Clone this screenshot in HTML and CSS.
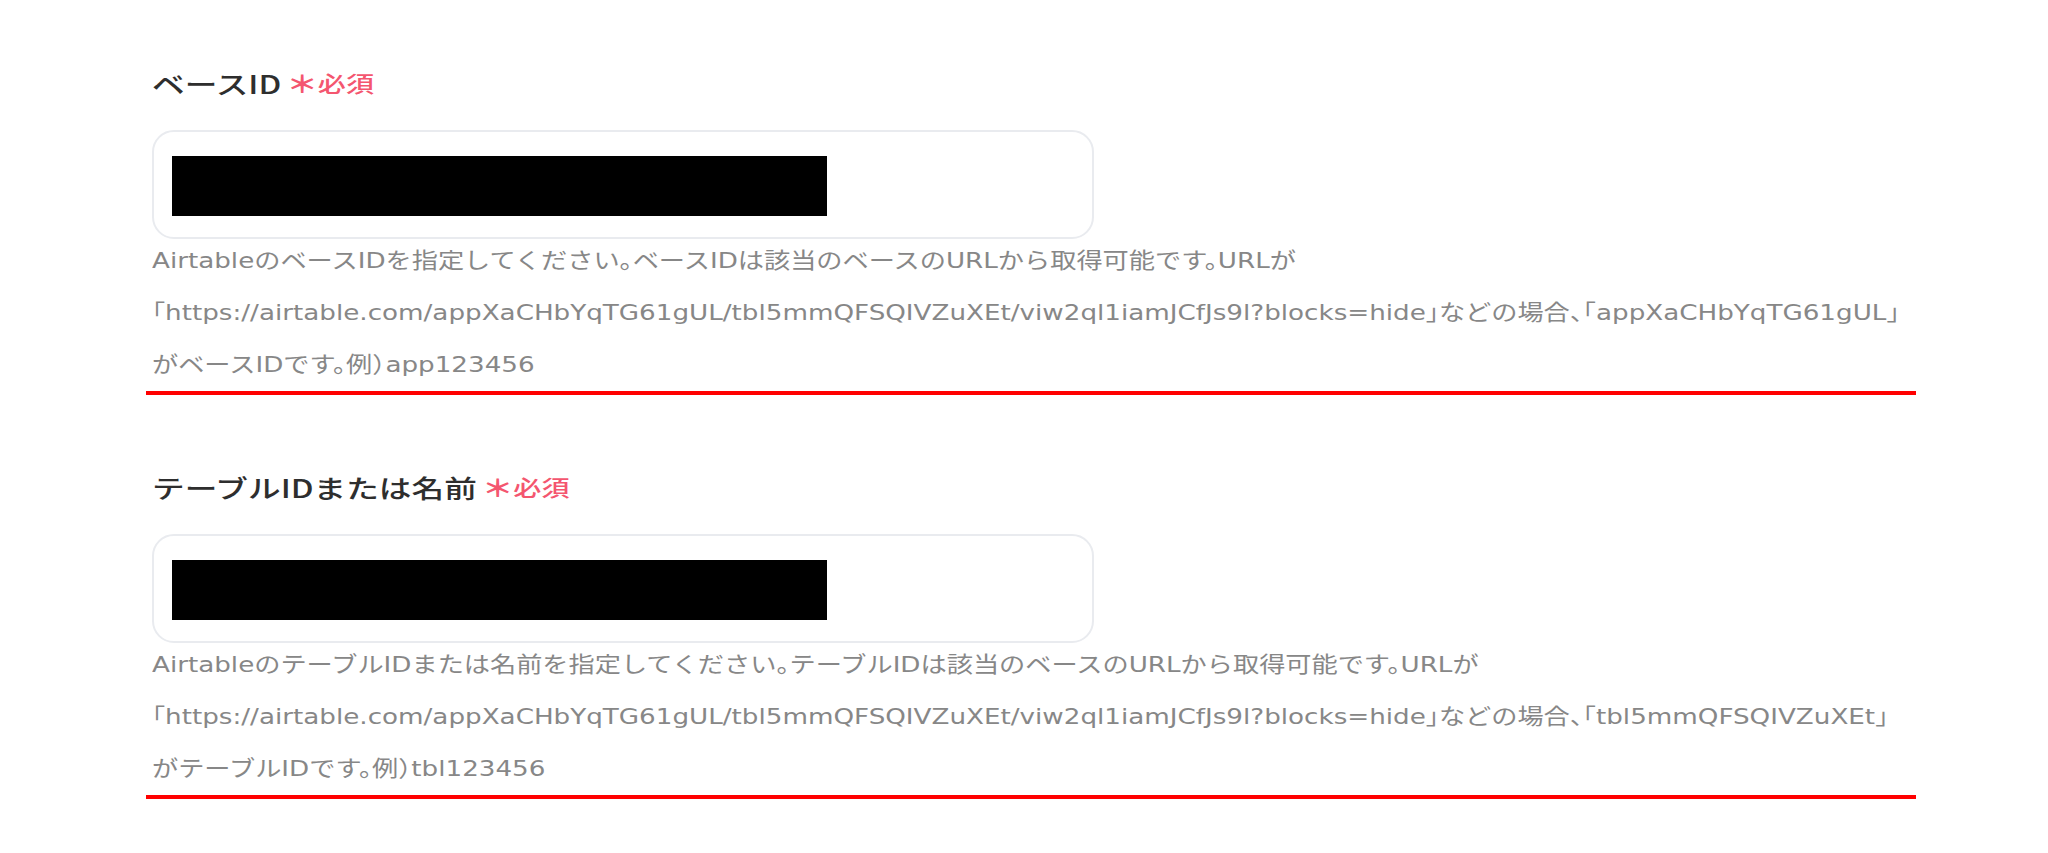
FILE: index.html
```html
<!DOCTYPE html>
<html lang="ja">
<head>
<meta charset="utf-8">
<title>Airtable 設定</title>
<link rel="stylesheet" href="styles.css">
</head>
<body>
<main class="form">
  <section class="field">
    <div class="label">ベースID<span class="req"><span class="ast">＊</span>必須</span></div>
    <div class="input"><div class="redact"></div></div>
    <p class="help">AirtableのベースIDを指定してください。ベースIDは該当のベースのURLから取得可能です。URLが<br>「https://airtable.com/appXaCHbYqTG61gUL/tbl5mmQFSQIVZuXEt/viw2ql1iamJCfJs9l?blocks=hide」などの場合、「appXaCHbYqTG61gUL」<br>がベースIDです。例）app123456</p>
  </section>
  <section class="field">
    <div class="label">テーブルIDまたは名前<span class="req"><span class="ast">＊</span>必須</span></div>
    <div class="input"><div class="redact"></div></div>
    <p class="help">AirtableのテーブルIDまたは名前を指定してください。テーブルIDは該当のベースのURLから取得可能です。URLが<br>「https://airtable.com/appXaCHbYqTG61gUL/tbl5mmQFSQIVZuXEt/viw2ql1iamJCfJs9l?blocks=hide」などの場合、「tbl5mmQFSQIVZuXEt」<br>がテーブルIDです。例）tbl123456</p>
  </section>
</main>
</body>
</html>
```
FILE: styles.css
```css
html, body {
  margin: 0;
  padding: 0;
  background: #ffffff;
}
body {
  font-family: "Noto Sans CJK JP", "Noto Sans", sans-serif;
  color: #333333;
}
.form {
  padding-top: 63px;
}
.field {
  margin-left: 146px;
  width: 1770px;
  box-sizing: border-box;
  padding-left: 6px;
  padding-bottom: 0;
  border-bottom: 4px solid #ff0000;
  margin-bottom: 72px;
}
.label {
  width: max-content;
  font-size: 25px;
  line-height: 40px;
  font-weight: 500;
  color: #2e2e2e;
  display: flex;
  align-items: center;
  transform: scaleX(1.306);
  transform-origin: 0 50%;
}
.req {
  color: #f4566f;
  font-size: 21.5px;
  font-weight: 500;
  margin-left: 4px;
  display: flex;
  align-items: center;
}
.ast {
  font-size: 24px;
  font-weight: 700;
}
.input {
  margin-top: 27px;
  width: 942px;
  height: 109px;
  box-sizing: border-box;
  border: 2px solid #e9ebef;
  border-radius: 22px;
  padding: 24px 0 0 18px;
}
.redact {
  width: 655px;
  height: 60px;
  background: #000000;
}
.help {
  width: max-content;
  margin: -4px 0 0;
  font-family: "DejaVu Sans", "Noto Sans CJK JP", sans-serif;
  font-size: 22px;
  line-height: 52px;
  color: #878787;
  white-space: nowrap;
  font-feature-settings: "halt";
  transform: scaleX(1.19);
  transform-origin: 0 50%;
}
```
